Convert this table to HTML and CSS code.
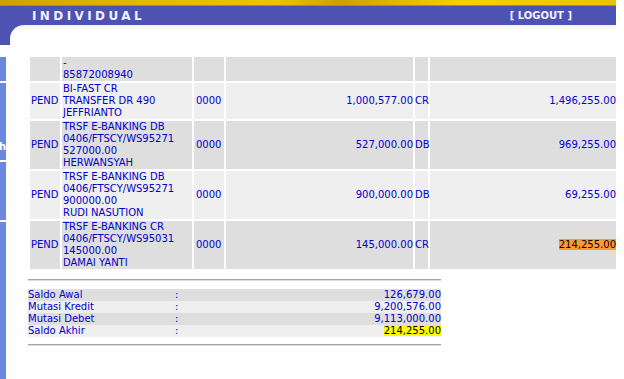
FILE: index.html
```html
<!DOCTYPE html>
<html>
<head>
<meta charset="utf-8">
<link rel="stylesheet" href="styles.css">
</head>
<body>
<div class="page">
  <div class="topbar"></div>
  <div class="header">
    <span class="title">INDIVIDUAL</span>
    <span class="logout">[ LOGOUT ]</span>
  </div>
  <div class="curve"><div class="curve-inner"></div></div>
  <div class="main">
    <div class="sidebar">
      <div class="side-item s1"></div>
      <div class="side-item s2"><span class="side-text">h</span></div>
      <div class="side-item s3"></div>
      <div class="side-item s4"></div>
    </div>
    <div class="content">
      <table class="mutasi">
        <colgroup>
          <col class="c1"><col class="c2"><col class="c3"><col class="c4"><col class="c5"><col class="c6">
        </colgroup>
        <tr class="dark">
          <td></td>
          <td class="desc">-<br>85872008940</td>
          <td></td><td></td><td></td><td></td>
        </tr>
        <tr class="light">
          <td>PEND</td>
          <td class="desc">BI-FAST CR<br>TRANSFER DR 490<br>JEFFRIANTO</td>
          <td class="cab">0000</td>
          <td class="num">1,000,577.00</td>
          <td class="dc">CR</td>
          <td class="num">1,496,255.00</td>
        </tr>
        <tr class="dark">
          <td>PEND</td>
          <td class="desc">TRSF E-BANKING DB<br>0406/FTSCY/WS95271<br>527000.00<br>HERWANSYAH</td>
          <td class="cab">0000</td>
          <td class="num">527,000.00</td>
          <td class="dc">DB</td>
          <td class="num">969,255.00</td>
        </tr>
        <tr class="light">
          <td>PEND</td>
          <td class="desc">TRSF E-BANKING DB<br>0406/FTSCY/WS95271<br>900000.00<br>RUDI NASUTION</td>
          <td class="cab">0000</td>
          <td class="num">900,000.00</td>
          <td class="dc">DB</td>
          <td class="num">69,255.00</td>
        </tr>
        <tr class="dark">
          <td>PEND</td>
          <td class="desc">TRSF E-BANKING CR<br>0406/FTSCY/WS95031<br>145000.00<br>DAMAI YANTI</td>
          <td class="cab">0000</td>
          <td class="num">145,000.00</td>
          <td class="dc">CR</td>
          <td class="num"><span class="hl-orange">214,255.00</span></td>
        </tr>
      </table>

      <div class="rule first"></div>
      <div class="summary">
        <div class="srow dark"><span>Saldo Awal</span><span class="colon">:</span><span class="val">126,679.00</span></div>
        <div class="srow light"><span>Mutasi Kredit</span><span class="colon">:</span><span class="val">9,200,576.00</span></div>
        <div class="srow dark"><span>Mutasi Debet</span><span class="colon">:</span><span class="val">9,113,000.00</span></div>
        <div class="srow light"><span>Saldo Akhir</span><span class="colon">:</span><span class="val"><span class="hl-yellow">214,255.00</span></span></div>
      </div>
      <div class="rule second"></div>
    </div>
  </div>
</div>
</body>
</html>
```

FILE: styles.css
```css
html, body {
  margin: 0;
  padding: 0;
  background: #ffffff;
}

body {
  font-family: Verdana, "DejaVu Sans", sans-serif;
  font-size: 10px;
  line-height: 12px;
  color: #0000cc;
}

.page {
  width: 616px;
  height: 379px;
  overflow: hidden;
}

.topbar {
  height: 5px;
  border-bottom: 1px solid #b38f00;
  background: linear-gradient(to right, #c9a300 0%, #dcb800 20%, #e8c600 45%, #c8a200 55%, #f2d200 75%, #e8c500 100%);
}

.header {
  height: 19px;
  background: #4e52b2;
  display: flex;
  align-items: center;
  justify-content: space-between;
  padding: 0 44px 0 32px;
  color: #f2f2ff;
  font-weight: bold;
}

.title {
  font-size: 12px;
  letter-spacing: 3.4px;
  line-height: 14px;
}

.logout {
  font-size: 10px;
  line-height: 12px;
}

.curve {
  height: 20px;
  background: #4e52b2;
}

.curve-inner {
  height: 20px;
  margin-left: 10px;
  background: linear-gradient(to bottom, #f2f2f4 0px, #ffffff 5px);
  border-top-left-radius: 14px;
}

.main {
  display: flex;
  align-items: flex-start;
}

.sidebar {
  flex: 0 0 6px;
  width: 6px;
  margin-top: 12px;
  display: flex;
  flex-direction: column;
  gap: 2px;
  overflow: hidden;
}

.side-item {
  background: #6b87de;
  color: #ffffff;
  font-weight: bold;
}

.s1 { height: 24px; }
.s2 { height: 77px; }
.s3 { height: 58px; }
.s4 { height: 200px; }

.side-text {
  display: block;
  margin-top: 58px;
  margin-left: -1px;
}

.content {
  flex: 0 0 auto;
  margin-left: 22px;
  padding-top: 10px;
}

.mutasi {
  border-collapse: separate;
  border-spacing: 2px;
  table-layout: fixed;
  width: 590px;
}

.c1 { width: 30px; }
.c2 { width: 130px; }
.c3 { width: 30px; }
.c4 { width: 187px; }
.c5 { width: 13px; }
.c6 { width: 186px; }

.mutasi td {
  padding: 0 0 0 1px;
  white-space: nowrap;
  vertical-align: middle;
}

.mutasi td.cab {
  padding-left: 2px;
}

.mutasi td.dc {
  padding: 0;
}

.mutasi td.num {
  text-align: right;
  padding: 0;
}

.dark { background: #dedede; }
.light { background: #efefef; }

.hl-orange {
  background: #ff9933;
  color: #000000;
}

.hl-yellow {
  background: #ffff00;
  color: #000000;
}

.rule {
  width: 413px;
  height: 1px;
  border-top: 1px solid #a4a4a4;
  background: #dcdcdc;
}

.rule.first { margin-top: 8px; }
.rule.second { margin-top: 7px; }

.summary {
  width: 413px;
  margin-top: 8px;
}

.srow {
  display: grid;
  grid-template-columns: 147px 20px 1fr;
  height: 12px;
}

.val {
  text-align: right;
}
```
